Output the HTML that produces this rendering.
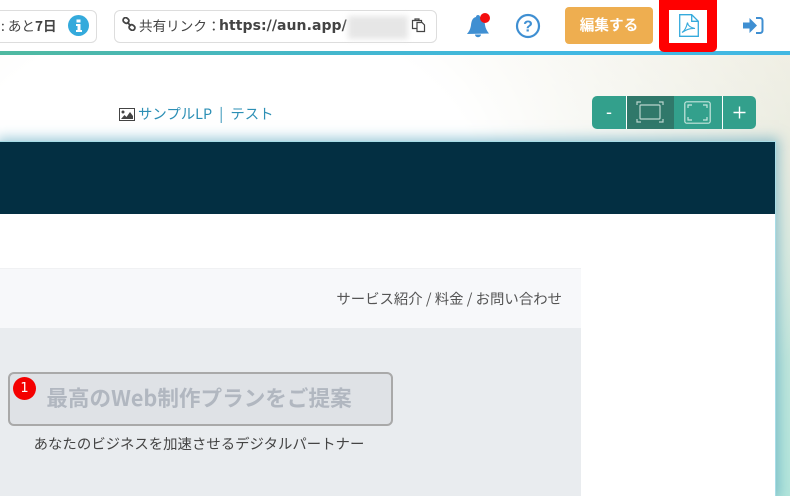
<!DOCTYPE html>
<html lang="ja"><head><meta charset="utf-8"><style>
*{box-sizing:border-box}
html,body{margin:0;padding:0;width:790px;height:496px;overflow:hidden;background:#fff}
body{position:relative;font-family:"Liberation Sans","Noto Sans CJK JP",sans-serif}
.a{position:absolute;white-space:nowrap}
.n{font-family:"Noto Sans CJK JP",sans-serif}
svg{position:absolute;display:block}
</style></head><body>
<div class="a" style="left:0;top:55px;width:790px;height:441px;background:radial-gradient(ellipse 640px 400px at 220px 120px,#fff 0%,#fff 40%,rgba(255,255,255,0) 100%),linear-gradient(180deg,#eeede1 0%,#e4e7d9 25%,#c0e6dc 70%,#b4e6dc 100%)"></div>
<div class="a" style="left:0;top:0;width:790px;height:51px;background:#fff"></div>
<div class="a" style="left:0;top:51px;width:790px;height:4px;background:linear-gradient(90deg,#4fb9a0 0%,#43b7d0 45%,#42b8e2 70%,#42b8e2 100%)"></div>

<div class="a" style="left:-20px;top:10px;width:117px;height:33px;background:#fff;border:1px solid #ddd;border-radius:6px"></div>
<div class="a n" style="left:1px;top:15px;font-size:13.6px;line-height:20px;color:#444">: あと<b>7日</b></div>
<div class="a" style="left:68px;top:15px;width:21px;height:21px;border-radius:50%;background:#34aadc"></div>
<svg style="left:68px;top:15px" width="21" height="21" viewBox="0 0 21 21"><path fill="#fff" d="M8.500 4.500h4v3h-4zM8 9h4.500v6H14v2H8v-2h1.500v-4H8z"/></svg>

<div class="a" style="left:114px;top:10px;width:323px;height:33px;background:#fff;border:1px solid #ddd;border-radius:6px"></div>
<svg style="left:122px;top:17px" width="14" height="14" viewBox="0 0 14 14" fill="none" stroke="#444" stroke-width="1.800"><rect x="1" y="1" width="6" height="5" rx="2.500" transform="rotate(40 4 3.500)"/><rect x="7" y="8" width="6" height="5" rx="2.500" transform="rotate(40 10 10.500)"/><path d="M5 5l4 4"/></svg>
<div class="a n" style="left:139px;top:15px;font-size:13.6px;line-height:20px;color:#444">共有リンク：</div>
<div class="a" style="left:219px;top:16px;font:bold 14px/20px 'DejaVu Sans',sans-serif;letter-spacing:.06px;color:#444">https://aun.app/</div>
<div class="a" style="left:348px;top:16px;width:60px;height:23px;background:#e6e6e6;filter:blur(3px)"></div>
<svg style="left:411px;top:17px" width="16" height="16" viewBox="0 0 16 16" fill="none" stroke="#444" stroke-width="1.200"><path d="M6 11.500H1.500V3.500H4M8 3.500h2.500V5"/><path d="M4 3.500V2h4v1.500z"/><path d="M6 5.500h5l2.500 2.500v6.500H6z"/></svg>

<svg style="left:465px;top:11px" width="28" height="28" viewBox="0 0 28 28"><path fill="#3f8fd2" d="M13 4c1 0 2 .8 2 2 4 .7 4.500 4 5 8 .5 3.500 2 6 4 8.500L2 23c2-2.500 3.500-5 4-9 .5-4 1.500-7.300 5-8 0-1.200 1-2 2-2zM10 23.500h6c0 1.500-1.300 2.700-3 2.700s-3-1.200-3-2.700z"/><circle cx="20" cy="7" r="5" fill="#f40d0d"/></svg>
<svg style="left:515px;top:13px" width="26" height="26" viewBox="0 0 26 26"><circle cx="13" cy="13" r="11" fill="none" stroke="#3f8fd2" stroke-width="2.200"/><text x="13" y="18.500" text-anchor="middle" font-family="Liberation Sans" font-weight="bold" font-size="16" fill="#3f8fd2">?</text></svg>

<div class="a n" style="left:565px;top:7px;width:88px;height:37px;background:#eeae50;border-radius:4px;color:#fff;font-weight:bold;font-size:14.6px;line-height:36px;text-align:center">編集する</div>

<div class="a" style="left:659px;top:0;width:58px;height:52px;background:#f00;border-radius:0 0 5px 5px"></div>
<div class="a" style="left:669px;top:10px;width:38px;height:33px;background:#fff"></div>
<svg style="left:679px;top:14px" width="20" height="23" viewBox="0 0 20 23" fill="none" stroke="#34aadc" stroke-width="1.300"><path d="M.7.700h12l6.600 6.600v15H.7z"/><path d="M12.700.700v6.600h6.600"/><path d="M3 18.500c2.500-1.500 4.500-5.500 5.500-10 .3 3 2.500 5 7.500 6-4.500-.5-8 .5-13 4z" stroke-width="1.100"/></svg>
<svg style="left:742px;top:15px" width="22" height="21" viewBox="0 0 22 21"><path fill="#3f8fd2" d="M1 7.500h6.500V3l7.500 7.500-7.500 7.500v-4.500H1z"/><path fill="none" stroke="#3f8fd2" stroke-width="2" d="M14 3h4c1.500 0 2.500 1 2.500 2.500v10c0 1.500-1 2.500-2.500 2.500h-4"/></svg>

<svg style="left:119px;top:108px" width="16" height="13" viewBox="0 0 16 13"><rect x=".5" y=".5" width="15" height="12" fill="#fff" stroke="#444"/><circle cx="4" cy="4" r="1.500" fill="#444"/><path fill="#444" d="M2 11l3.500-4 2 2 3.500-5 3 4v3z"/></svg>
<div class="a n" style="left:138px;top:104px;font-size:14.4px;line-height:20px;color:#2c8fb5;word-spacing:4px">サンプルLP | テスト</div>

<div class="a" style="left:592px;top:96px;width:164px;height:33px;background:#33a08c;border-radius:5px"></div>
<div class="a" style="left:627px;top:96px;width:47px;height:33px;background:#30786a"></div>
<div class="a" style="left:626px;top:96px;width:1px;height:33px;background:#fff"></div>
<div class="a" style="left:722px;top:96px;width:1px;height:33px;background:#fff"></div>
<div class="a" style="left:592px;top:96px;width:34px;height:33px;color:#fff;font-size:18px;line-height:32px;text-align:center">-</div>
<svg style="left:732px;top:105px" width="15" height="15" viewBox="0 0 15 15" stroke="#fff" stroke-width="1.400"><path d="M7.500 1.500v12M1.500 7.500h12"/></svg>
<svg style="left:636px;top:101px" width="28" height="22" viewBox="0 0 28 22" fill="none" stroke="#b9d4cd" stroke-width="1.200"><rect x="4" y="4" width="20" height="14" rx="1"/><path d="M1 4V1h4M23 1h4v3M1 18v3h4M23 21h4v-3"/></svg>
<svg style="left:684px;top:101px" width="27" height="23" viewBox="0 0 27 23" fill="none" stroke="#c8e6de" stroke-width="1.200"><rect x=".8" y=".8" width="25.400" height="21.400" rx="2"/><path d="M4 7V4h4M19 4h4v3M4 16v3h4M19 19h4v-3"/></svg>

<div class="a" style="left:0;top:141px;width:776px;height:355px;background:#fff;border:1px solid #a8dce6;border-bottom:0;border-left:0;box-shadow:0 0 12px 3px rgba(60,150,180,.5)"></div>
<div class="a" style="left:0;top:142px;width:775px;height:72px;background:#032f42"></div>

<div class="a" style="left:0;top:268px;width:581px;height:228px;background:#e9ecef"></div>
<div class="a" style="left:0;top:268px;width:581px;height:60px;background:#f7f8fa;border-top:1px solid #f0f1f3"></div>
<div class="a n" style="right:228px;top:289px;font-size:14.4px;line-height:20px;color:#555">サービス紹介 / 料金 / お問い合わせ</div>

<div class="a" style="left:8px;top:372px;width:385px;height:54px;background:#dfe2e6;border:2px solid #a9a9a9;border-radius:6px"></div>
<div class="a n" style="left:8px;top:382px;width:382px;text-align:center;font-size:21.6px;line-height:32px;font-weight:bold;color:#b1b7c0">最高のWeb制作プランをご提案</div>
<div class="a" style="left:13px;top:377px;width:23px;height:23px;border-radius:50%;background:#f40000;color:#fff;font:13px/23px 'DejaVu Sans',sans-serif;text-align:center">1</div>
<div class="a n" style="left:8px;top:434px;width:382px;text-align:center;font-size:14.4px;line-height:20px;color:#444">あなたのビジネスを加速させるデジタルパートナー</div>
</body></html>
